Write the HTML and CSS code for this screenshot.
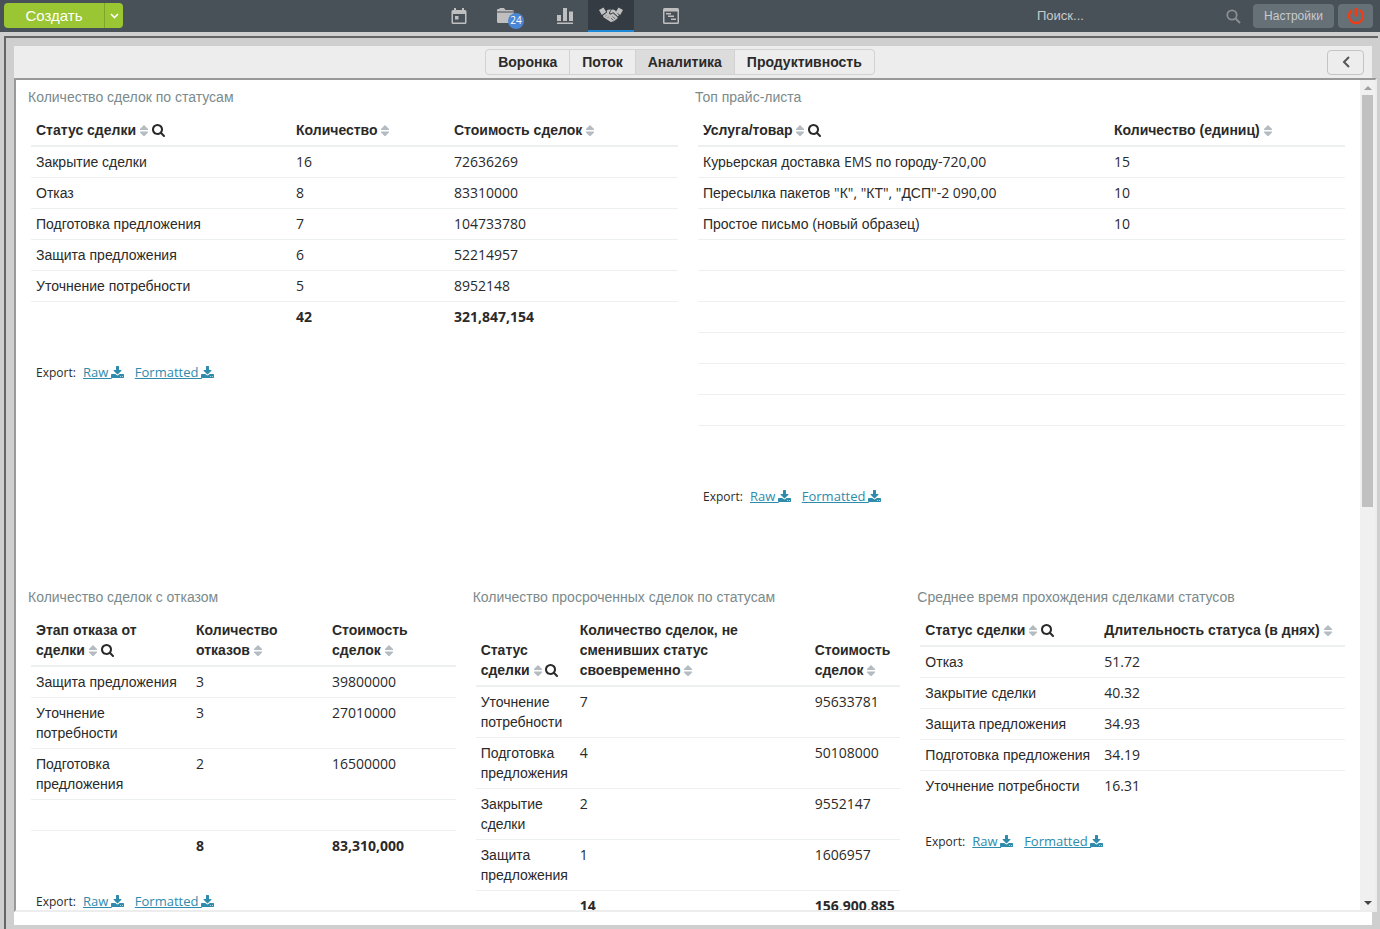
FILE: index.html
```
<!DOCTYPE html>
<html lang="ru">
<head>
    <meta charset="UTF-8">
    <meta name="viewport" content="width=device-width, initial-scale=1.0">
    <title>Аналитика</title>
    <link rel="stylesheet" href="styles.css">
</head>
<body>
    <svg class="sprite" aria-hidden="true">
        <symbol id="icon-sort" viewBox="0 0 8 11">
            <path d="M4 0L8 4V5H0V4zM0 6.500H8V7.500L4 11.500L0 7.500z"/>
        </symbol>
        <symbol id="icon-search" viewBox="64 128 1664 1664">
            <path d="M1216 832q0-185-131.5-316.500t-316.500-131.500-316.500 131.500-131.500 316.500 131.500 316.500 316.500 131.500 316.500-131.500 131.500-316.500zm512 832q0 52-38 90t-90 38q-54 0-90-38l-343-342q-179 124-399 124-143 0-273.500-55.500t-225-150-150-225-55.500-273.500 55.500-273.500 150-225 225-150 273.500-55.500 273.500 55.500 225 150 150 225 55.500 273.500q0 220-124 399l343 343q37 37 37 90z"/>
        </symbol>
        <symbol id="icon-download" viewBox="64 0 1664 1536">
            <path d="M1344 1344q0-26-19-45t-45-19-45 19-19 45 19 45 45 19 45-19 19-45zm256 0q0-26-19-45t-45-19-45 19-19 45 19 45 45 19 45-19 19-45zm128-224v320q0 40-28 68t-68 28h-1472q-40 0-68-28t-28-68v-320q0-40 28-68t68-28h465l135 136q58 56 136 56t136-56l136-136h464q40 0 68 28t28 68zm-325-569q17 41-14 70l-448 448q-18 19-45 19t-45-19l-448-448q-31-29-14-70 17-39 59-39h256v-448q0-26 19-45t45-19h256q26 0 45 19t19 45v448h256q42 0 59 39z"/>
        </symbol>
    </svg>

    <header class="topbar">
        <div class="create">
            <button class="create-main" type="button">Создать</button>
            <button class="create-more" type="button" aria-label="Ещё">
                <svg width="9" height="6" viewBox="0 0 9 6"><path d="M1 1L4.500 4.500L8 1" fill="none" stroke="#fff" stroke-width="1.600"/></svg>
            </button>
        </div>
        <nav class="modules">
            <a class="module" href="#" aria-label="Календарь">
                <svg width="16" height="16" viewBox="0 0 16 16">
                    <path fill-rule="evenodd" d="M3 0H5V2H11V0H13V2H14Q15.500 2 15.500 3.500V14.500Q15.500 16 14 16H2Q.5 16 .5 14.500V3.500Q.5 2 2 2H3zM2 6V14.500H14V6zM4 8H7.500V11.500H4z"/>
                </svg>
            </a>
            <a class="module" href="#" aria-label="Задачи">
                <svg width="17" height="16" viewBox="0 0 17 16">
                    <path d="M0 3.500V2Q0 1 1 1H2L3 0H7L8.500 2H15Q17 2 17 3.500z"/>
                    <path d="M0 4.500H17V13Q17 15 15 15H1.500Q0 15 0 13.500z"/>
                </svg>
                <span class="badge">24</span>
            </a>
            <a class="module gap" href="#" aria-label="Отчёты">
                <svg width="16" height="17" viewBox="0 0 16 17">
                    <path d="M0 7H4V13H0zM6 0H10V13H6zM12 3.500H16V13H12zM0 14.500H16V16H0z"/>
                </svg>
            </a>
            <a class="module active" href="#" aria-label="Сделки">
                <svg width="24" height="16" viewBox="0 0 24 16">
                    <path d="M0 3L4.500 .5L7.200 5L2.800 8zM24 3L19.500 .5L16.800 5L21.200 8z"/>
                    <path d="M7.800 3.500Q9.500 2.200 12 2.500L10 5.500Q9.800 7.800 12 7.500L14 6.300L18.500 10.200Q19 11.800 17.500 12Q17.300 13.500 15.800 13.300Q15.200 14.800 13.800 14.300Q12.500 15.800 11 14.500L4.500 10.200L4 8.500L8 5.500z"/>
                    <path d="M12.800 2.500Q15 2.200 16.500 3.800L20 8.500L19 9.500L14.300 5.300L11.800 6.500Q10.600 6.500 11.200 5z"/>
                    <path d="M13.500 9.500L16.500 12.300M12 11L14.500 13.500M6.300 9.300L7.500 8.200M8.500 11L9.700 9.800" fill="none" stroke="#343b42" stroke-width=".6"/>
                </svg>
            </a>
            <a class="module last" href="#" aria-label="Процессы">
                <svg width="16" height="16" viewBox="0 0 16 16">
                    <path fill-rule="evenodd" d="M1.500 0H14.500Q16 0 16 1.500V14.500Q16 16 14.500 16H1.500Q0 16 0 14.500V1.500Q0 0 1.500 0zM1.500 3.500V14.500H14.500V3.500zM3 5H8V6.500H3zM5 7.500H11V9H5zM8 10.500H13V12H8z"/>
                </svg>
            </a>
        </nav>
        <div class="tools">
            <form class="search" role="search">
                <input class="search-input" type="text" placeholder="Поиск..." aria-label="Поиск">
                <button class="search-button" type="button" aria-label="Найти">
                    <svg width="15" height="15" viewBox="0 0 15 15" fill="none" stroke="#8b8f92"><circle cx="6" cy="6" r="4.700" stroke-width="1.800"/><path d="M9.500 9.500L14 14" stroke-width="2"/></svg>
                </button>
            </form>
            <button class="tool settings" type="button">Настройки</button>
            <button class="tool power" type="button" aria-label="Выход">
                <svg width="18" height="18" viewBox="0 0 18 18" fill="none" stroke="#f03c14" stroke-width="2.400"><path d="M5 3.300A7 7 0 1 0 13 3.300"/><path d="M9 1V9.500" stroke-width="2.800"/></svg>
            </button>
        </div>
    </header>

    <main class="frame">
        <div class="panel">
            <div class="toolbar">
                <div class="tabs">
                    <button class="tab" type="button">Воронка</button>
                    <button class="tab" type="button">Поток</button>
                    <button class="tab active" type="button">Аналитика</button>
                    <button class="tab" type="button">Продуктивность</button>
                </div>
                <button class="back" type="button" aria-label="Назад">
                    <svg width="8" height="12" viewBox="0 0 8 12"><path d="M7 1L2 6L7 11" fill="none" stroke="#555" stroke-width="2"/></svg>
                </button>
            </div>

            <div class="viewport">
                <div class="report">
                    <section class="card wide">
                        <h2>Количество сделок по статусам</h2>
                        <table>
                            <colgroup><col class="w-260"><col class="w-158"><col></colgroup>
                            <thead>
                                <tr>
                                    <th>Статус сделки <svg class="sort"><use href="#icon-sort"/></svg> <button class="filter" type="button" aria-label="Поиск"><svg><use href="#icon-search"/></svg></button></th>
                                    <th>Количество <svg class="sort"><use href="#icon-sort"/></svg></th>
                                    <th>Стоимость сделок <svg class="sort"><use href="#icon-sort"/></svg></th>
                                </tr>
                            </thead>
                            <tbody>
                                <tr><td>Закрытие сделки</td><td class="num">16</td><td class="num">72636269</td></tr>
                                <tr><td>Отказ</td><td class="num">8</td><td class="num">83310000</td></tr>
                                <tr><td>Подготовка предложения</td><td class="num">7</td><td class="num">104733780</td></tr>
                                <tr><td>Защита предложения</td><td class="num">6</td><td class="num">52214957</td></tr>
                                <tr><td>Уточнение потребности</td><td class="num">5</td><td class="num">8952148</td></tr>
                                <tr class="total"><td></td><td class="num">42</td><td class="num">321,847,154</td></tr>
                            </tbody>
                        </table>
                        <p class="export">Export: <a href="#">Raw <svg><use href="#icon-download"/></svg></a> <a href="#">Formatted <svg><use href="#icon-download"/></svg></a></p>
                    </section>

                    <section class="card wide">
                        <h2>Топ прайс-листа</h2>
                        <table>
                            <colgroup><col class="w-411"><col></colgroup>
                            <thead>
                                <tr>
                                    <th>Услуга/товар <svg class="sort"><use href="#icon-sort"/></svg> <button class="filter" type="button" aria-label="Поиск"><svg><use href="#icon-search"/></svg></button></th>
                                    <th>Количество (единиц) <svg class="sort"><use href="#icon-sort"/></svg></th>
                                </tr>
                            </thead>
                            <tbody>
                                <tr><td>Курьерская доставка <span class="num">EMS</span> по городу<span class="num">-720,00</span></td><td class="num">15</td></tr>
                                <tr><td>Пересылка пакетов <span class="num">"</span>К<span class="num">", "</span>КТ<span class="num">", "</span>ДСП<span class="num">"-2 090,00</span></td><td class="num">10</td></tr>
                                <tr><td>Простое письмо (новый образец)</td><td class="num">10</td></tr>
                                <tr><td></td><td></td></tr>
                                <tr><td></td><td></td></tr>
                                <tr><td></td><td></td></tr>
                                <tr><td></td><td></td></tr>
                                <tr><td></td><td></td></tr>
                                <tr><td></td><td></td></tr>
                                <tr class="total"><td></td><td></td></tr>
                            </tbody>
                        </table>
                        <p class="export">Export: <a href="#">Raw <svg><use href="#icon-download"/></svg></a> <a href="#">Formatted <svg><use href="#icon-download"/></svg></a></p>
                    </section>

                    <section class="card">
                        <h2>Количество сделок с отказом</h2>
                        <table>
                            <colgroup><col class="w-160"><col class="w-136"><col></colgroup>
                            <thead>
                                <tr>
                                    <th>Этап отказа от сделки <svg class="sort"><use href="#icon-sort"/></svg> <button class="filter" type="button" aria-label="Поиск"><svg><use href="#icon-search"/></svg></button></th>
                                    <th>Количество отказов <svg class="sort"><use href="#icon-sort"/></svg></th>
                                    <th>Стоимость сделок <svg class="sort"><use href="#icon-sort"/></svg></th>
                                </tr>
                            </thead>
                            <tbody>
                                <tr><td>Защита предложения</td><td class="num">3</td><td class="num">39800000</td></tr>
                                <tr><td>Уточнение потребности</td><td class="num">3</td><td class="num">27010000</td></tr>
                                <tr><td>Подготовка предложения</td><td class="num">2</td><td class="num">16500000</td></tr>
                                <tr><td></td><td></td><td></td></tr>
                                <tr class="total"><td></td><td class="num">8</td><td class="num">83,310,000</td></tr>
                            </tbody>
                        </table>
                        <p class="export">Export: <a href="#">Raw <svg><use href="#icon-download"/></svg></a> <a href="#">Formatted <svg><use href="#icon-download"/></svg></a></p>
                    </section>

                    <section class="card">
                        <h2>Количество просроченных сделок по статусам</h2>
                        <table>
                            <colgroup><col class="w-99"><col class="w-235"><col></colgroup>
                            <thead>
                                <tr>
                                    <th>Статус сделки <svg class="sort"><use href="#icon-sort"/></svg> <button class="filter" type="button" aria-label="Поиск"><svg><use href="#icon-search"/></svg></button></th>
                                    <th>Количество сделок, не сменивших статус своевременно <svg class="sort"><use href="#icon-sort"/></svg></th>
                                    <th>Стоимость сделок <svg class="sort"><use href="#icon-sort"/></svg></th>
                                </tr>
                            </thead>
                            <tbody>
                                <tr><td>Уточнение потребности</td><td class="num">7</td><td class="num">95633781</td></tr>
                                <tr><td>Подготовка предложения</td><td class="num">4</td><td class="num">50108000</td></tr>
                                <tr><td>Закрытие сделки</td><td class="num">2</td><td class="num">9552147</td></tr>
                                <tr><td>Защита предложения</td><td class="num">1</td><td class="num">1606957</td></tr>
                                <tr class="total"><td></td><td class="num">14</td><td class="num">156,900,885</td></tr>
                            </tbody>
                        </table>
                    </section>

                    <section class="card">
                        <h2>Среднее время прохождения сделками статусов</h2>
                        <table>
                            <colgroup><col class="w-179"><col></colgroup>
                            <thead>
                                <tr>
                                    <th>Статус сделки <svg class="sort"><use href="#icon-sort"/></svg> <button class="filter" type="button" aria-label="Поиск"><svg><use href="#icon-search"/></svg></button></th>
                                    <th>Длительность статуса (в днях) <svg class="sort"><use href="#icon-sort"/></svg></th>
                                </tr>
                            </thead>
                            <tbody>
                                <tr><td>Отказ</td><td class="num">51.72</td></tr>
                                <tr><td>Закрытие сделки</td><td class="num">40.32</td></tr>
                                <tr><td>Защита предложения</td><td class="num">34.93</td></tr>
                                <tr><td>Подготовка предложения</td><td class="num">34.19</td></tr>
                                <tr><td>Уточнение потребности</td><td class="num">16.31</td></tr>
                            </tbody>
                        </table>
                        <p class="export">Export: <a href="#">Raw <svg><use href="#icon-download"/></svg></a> <a href="#">Formatted <svg><use href="#icon-download"/></svg></a></p>
                    </section>
                </div>
                <div class="scrollbar" aria-hidden="true">
                    <span class="arrow up"></span>
                    <div class="track"><div class="thumb"></div></div>
                    <span class="arrow down"></span>
                </div>
            </div>
        </div>
    </main>
</body>
</html>
```
FILE: styles.css
```
* {
    box-sizing: border-box;
}
body {
    height: 100vh;
    margin: 0;
    display: flex;
    flex-direction: column;
    overflow: hidden;
    background: #cfcfcf;
    color: #2a2a2a;
    font: 14px/20px "Liberation Sans", Arial, sans-serif;
}
button {
    margin: 0;
    padding: 0;
    border: 0;
    background: none;
    color: inherit;
    font: inherit;
    cursor: pointer;
}
.sprite {
    display: none;
}

/* top bar */
.topbar {
    flex: none;
    display: flex;
    align-items: center;
    height: 32px;
    padding: 0 7px 0 4px;
    background: #495158;
}
.create {
    display: flex;
    height: 25px;
    margin-bottom: 1px;
    overflow: hidden;
    border-radius: 4px;
    background: #9bc634;
    color: #fff;
}
.create-main {
    width: 100px;
    font-size: 15px;
}
.create-more {
    width: 19px;
    display: flex;
    align-items: center;
    justify-content: center;
    border-left: 1px solid #7fa62a;
}
.modules {
    display: flex;
    height: 32px;
    margin-left: 313px;
}
.module {
    position: relative;
    width: 46px;
    display: flex;
    align-items: center;
    justify-content: center;
    fill: #bfbfbf;
}
.module.gap,
.module.last {
    margin-left: 14px;
}
.module.active {
    background: #343b42;
    border-bottom: 2px solid #1e88d8;
}
.badge {
    position: absolute;
    left: 26px;
    top: 13px;
    width: 16px;
    height: 16px;
    border-radius: 50%;
    background: #4a86d4;
    color: #fff;
    font: 10px/14px "Open Sans", sans-serif;
    text-align: center;
}
.tools {
    display: flex;
    align-items: center;
    gap: 4px;
    margin-left: auto;
}
.search {
    display: flex;
    align-items: center;
    margin-right: 8px;
}
.search-input {
    width: 189px;
    padding: 0;
    border: 0;
    outline: 0;
    background: none;
    color: #c8cbcd;
    font: 13px/20px "Liberation Sans", Arial, sans-serif;
}
.search-input::placeholder {
    color: #c8cbcd;
}
.search-button {
    display: flex;
}
.tool {
    height: 24px;
    border-radius: 4px;
    background: #667077;
    color: #c8cbcd;
}
.settings {
    width: 81px;
    font-size: 12px;
}
.power {
    width: 35px;
    display: flex;
    align-items: center;
    justify-content: center;
}

/* frame and toolbar */
.frame {
    flex: 1;
    min-height: 0;
    display: flex;
    margin: 4px 2px 0 4px;
    padding: 8px 6px 4px 8px;
    border: solid #666;
    border-width: 2px 0 0 2px;
}
.panel {
    flex: 1;
    min-width: 0;
    display: flex;
    flex-direction: column;
    padding-bottom: 13px;
    background: #fff;
}
.toolbar {
    flex: none;
    display: grid;
    grid-template-columns: 1fr auto 1fr;
    align-items: center;
    height: 32px;
    padding: 0 8px;
    background: #ededed;
}
.tabs {
    grid-column: 2;
    display: flex;
    height: 26px;
    margin-right: 26px;
    border: 1px solid #d2d2d2;
    border-radius: 4px;
    overflow: hidden;
}
.tab {
    padding: 0 12px;
    font-weight: bold;
}
.tab + .tab {
    border-left: 1px solid #d2d2d2;
}
.tab.active {
    background: #dcdcdc;
}
.back {
    justify-self: end;
    display: flex;
    align-items: center;
    justify-content: center;
    width: 37px;
    height: 25px;
    border: 1px solid #c4c4c4;
    border-radius: 4px;
}

/* report area */
.viewport {
    flex: 1;
    min-height: 0;
    display: flex;
    margin-right: -5px;
    border: 2px solid;
    border-color: #999 #ededed #ededed #999;
    background: #fff;
}
.report {
    flex: 1;
    min-width: 0;
    overflow: hidden;
    display: grid;
    grid-template-columns: repeat(6, 1fr);
    grid-auto-rows: 500px;
    padding: 0 5px;
}
.card {
    grid-column: span 2;
    min-width: 0;
    padding: 7px 10px 0;
}
.card.wide {
    grid-column: span 3;
}
h2 {
    margin: 0 -3px 8px;
    color: #7b8a8b;
    font-size: 14px;
    font-weight: normal;
}
table {
    width: 100%;
    table-layout: fixed;
    border-spacing: 0;
}
th,
td {
    padding: 5px;
    text-align: left;
    vertical-align: top;
}
th {
    vertical-align: bottom;
    border-bottom: 2px solid #ecf0f1;
}
td {
    height: 31px;
    border-bottom: 1px solid #ecf0f1;
}
tr:last-child td {
    border-bottom: 0;
    height: 30px;
}
.num {
    font-family: "Open Sans", sans-serif;
}
.total {
    font-weight: bold;
}
.w-99 { width: 99px; }
.w-136 { width: 136px; }
.w-158 { width: 158px; }
.w-160 { width: 160px; }
.w-179 { width: 179px; }
.w-235 { width: 235px; }
.w-260 { width: 260px; }
.w-411 { width: 411px; }
.sort {
    width: 8px;
    height: 11px;
    fill: #b4bcc2;
    vertical-align: -1px;
}
.filter svg {
    display: block;
    width: 13px;
    height: 13px;
    fill: #2a2a2a;
}
.filter {
    vertical-align: -2px;
}
.export {
    margin: 30px 5px 0;
    font: 12px/20px "Open Sans", sans-serif;
}
.export a {
    margin: 0 4px;
    color: #2e8bac;
    font-size: 13px;
}
.export svg {
    width: 13px;
    height: 12px;
    margin-left: -1px;
    fill: #2e8bac;
    vertical-align: -1px;
}

/* scrollbar */
.scrollbar {
    flex: none;
    width: 15px;
    display: flex;
    flex-direction: column;
    background: #f0f0f0;
}
.arrow {
    height: 15px;
    display: flex;
    align-items: center;
    justify-content: center;
}
.arrow::before {
    content: "";
    border: 4px solid transparent;
}
.up::before {
    border-top: 0;
    border-bottom-color: #a0a0a0;
}
.down::before {
    border-bottom: 0;
    border-top-color: #444;
}
.track {
    flex: 1;
    padding: 0 2px;
}
.thumb {
    height: 51.5%;
    background: #c0c0c0;
}
```
